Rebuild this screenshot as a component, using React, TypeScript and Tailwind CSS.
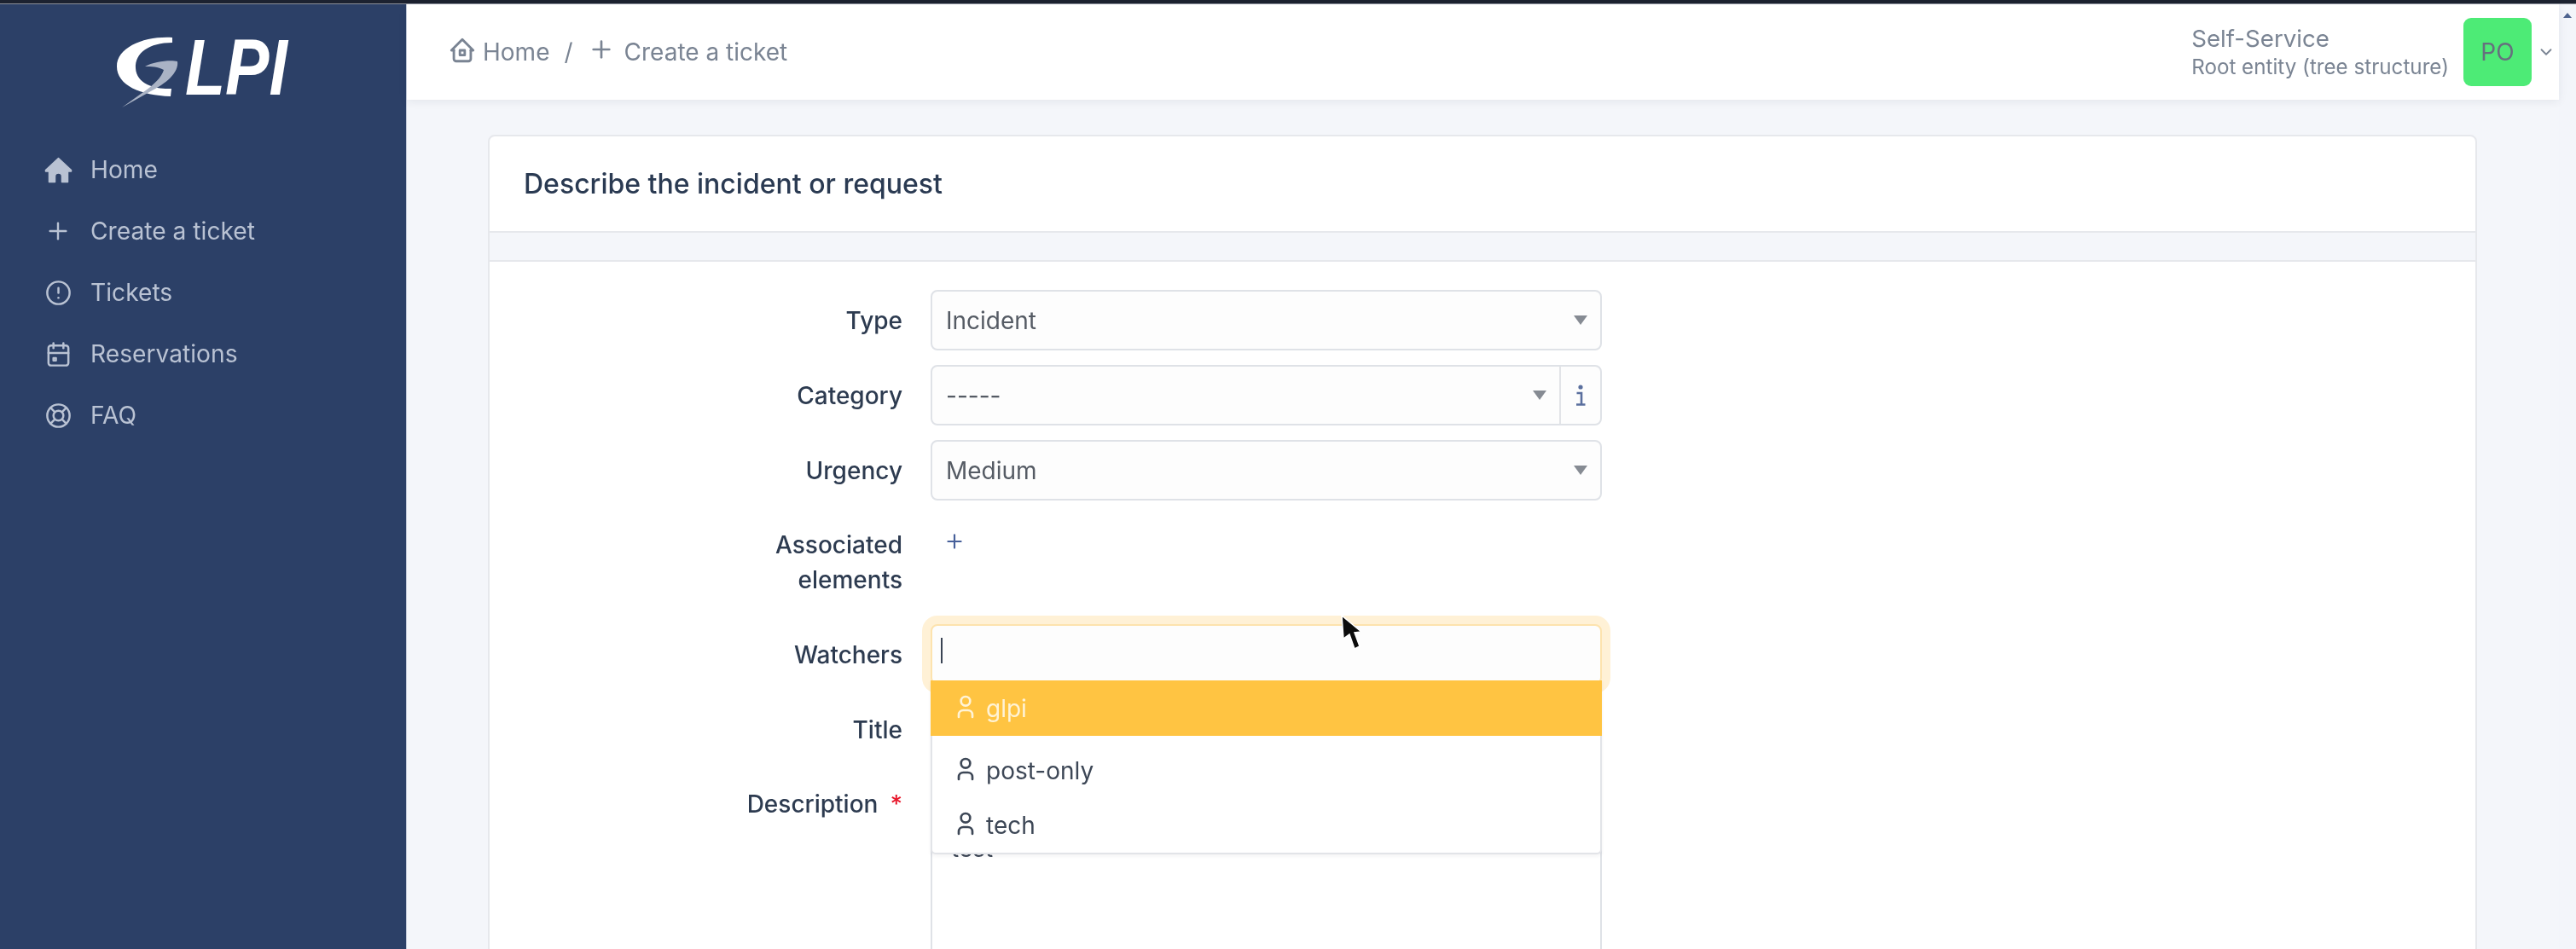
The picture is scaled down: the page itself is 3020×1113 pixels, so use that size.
import React from "react";
import {
  TbPlus,
  TbAlertCircle,
  TbCalendarEvent,
  TbLifebuoy,
  TbHome2,
  TbUser,
  TbChevronDown,
} from "react-icons/tb";

function Logo() {
  return (
    <svg width="260" height="120" viewBox="0 0 260 120" className="block">
      <path
        d="M102 24C70 22 37 35 37 58C37 80 65 92 100 93L101 84C85 85 60 80 59 60C58 42 75 30 102 30Z"
        fill="#ffffff"
      />
      <path
        d="M70 58C80 52 100 50 108 52C110 65 95 78 75 88L43 106L68 88C80 80 90 70 92 62C85 58 78 58 70 58Z"
        fill="#aab3c5"
      />
      <text
        x="117"
        y="91"
        fontFamily="'Liberation Sans', sans-serif"
        fontStyle="italic"
        fontWeight="700"
        fontSize="92"
        fill="#ffffff"
        textLength="120"
        lengthAdjust="spacingAndGlyphs"
      >
        LPI
      </text>
    </svg>
  );
}

function HomeSolid() {
  return (
    <svg width="33" height="31" viewBox="0 0 33 31">
      <path
        d="M16.5 1.5L31.5 15.5V17H27.5V29.5H20.5V23A4 4 0 0 0 12.5 23V29.5H5.5V17H1.5V15.5Z"
        fill="currentColor"
        stroke="currentColor"
        strokeWidth="1.5"
        strokeLinejoin="round"
      />
    </svg>
  );
}

const nav = [
  { label: "Home", icon: <HomeSolid /> },
  { label: "Create a ticket", icon: <TbPlus size={32} strokeWidth={1.8} /> },
  { label: "Tickets", icon: <TbAlertCircle size={35} strokeWidth={1.7} /> },
  { label: "Reservations", icon: <TbCalendarEvent size={35} strokeWidth={1.7} /> },
  { label: "FAQ", icon: <TbLifebuoy size={35} strokeWidth={1.7} /> },
];

function Sidebar() {
  return (
    <aside className="w-[477px] shrink-0 bg-[#2c4067] border-r border-[#c3cad9] text-[#b9c2d3]">
      <div className="h-[158px] pl-[100px] pt-[15px]">
        <Logo />
      </div>
      <nav>
        {nav.map((n) => (
          <div key={n.label} className="h-[72px] flex items-center pl-[50px] gap-[20px] text-[28.2px]">
            <span className="w-[36px] flex justify-center">{n.icon}</span>
            <span>{n.label}</span>
          </div>
        ))}
      </nav>
    </aside>
  );
}

function Caret() {
  return (
    <svg width="16" height="11" viewBox="0 0 16 11" className="block">
      <path d="M0 0H16L8 11Z" fill="#868b93" />
    </svg>
  );
}

function InfoGlyph() {
  return (
    <svg width="12" height="26" viewBox="0 0 12 26" className="block">
      <circle cx="6" cy="3" r="2.6" fill="#5a6f9e" />
      <path d="M1.5 10H7V23.5M1 23.5H11.5" fill="none" stroke="#5a6f9e" strokeWidth="2.6" />
    </svg>
  );
}

function Header() {
  return (
    <header className="relative z-10 h-[112px] shrink-0 bg-white shadow-[0_2px_10px_rgba(30,41,59,0.08)] flex items-center justify-between pl-[50px] pr-[4px] text-[#7a8493]">
      <div className="flex items-center text-[28px]">
        <TbHome2 size={34} strokeWidth={2} className="-ml-[2px] -mt-[4px]" />
        <span className="ml-[7px]">Home</span>
        <span className="ml-[17px]">/</span>
        <TbPlus size={32} strokeWidth={2} className="ml-[17px] -mt-[6px]" />
        <span className="ml-[11px]">Create a ticket</span>
      </div>
      <div className="flex items-center">
        <div className="flex flex-col">
          <span className="text-[27.7px] leading-[36px]">Self-Service</span>
          <span className="text-[24.2px] leading-[32px]">Root entity (tree structure)</span>
        </div>
        <div className="ml-[17px] w-[80px] h-[80px] rounded-[9px] bg-[#4deb76] flex items-center justify-center text-[28px] text-[#66707e]">
          PO
        </div>
        <TbChevronDown size={22} strokeWidth={2} className="ml-[6px]" />
      </div>
    </header>
  );
}

function Row({
  label,
  required,
  children,
  className,
}: {
  label: string;
  required?: boolean;
  children?: React.ReactNode;
  className?: string;
}) {
  return (
    <div className={"flex " + (className ?? "")}>
      <div className="w-[484px] shrink-0 h-[71px] flex items-center justify-end text-right text-[28px] font-medium text-[#2d3b50]">
        <span>{label}</span>
        {required && <span className="ml-[14px] text-[#e8172b]">*</span>}
      </div>
      <div className="ml-[33px] w-[787px]">{children}</div>
    </div>
  );
}

function Select({ value, addon }: { value: string; addon?: boolean }) {
  return (
    <div className="h-[71px] flex border-2 border-[#dfe2e7] rounded-[8px] bg-[#fdfdfd] text-[28px] text-[#555b64]">
      <div className="flex-1 flex items-center justify-between pl-[16px] pr-[15px]">
        <span>{value}</span>
        <Caret />
      </div>
      {addon && (
        <div className="w-[48px] border-l-2 border-[#e2e4e8] flex items-center justify-center">
          <InfoGlyph />
        </div>
      )}
    </div>
  );
}

function Options() {
  const items = [
    { t: "glpi", h: "h-[65px]", c: "bg-[#ffc442] text-[#fff3d6]" },
    { t: "post-only", h: "h-[82px]", c: "text-[#3d4756]" },
    { t: "tech", h: "h-[46px]", c: "text-[#3d4756]" },
  ];
  return (
    <div className="absolute left-0 right-0 top-[66px] z-20 bg-white border-x-2 border-b-2 border-[#e2e4e8] rounded-b-[6px] shadow-[0_2px_4px_rgba(30,41,59,0.06)] pb-[9px]">
      {items.map((i) => (
        <div key={i.t} className={"-mx-[2px] flex items-center pl-[25px] text-[28px] " + i.h + " " + i.c}>
          <TbUser size={32} strokeWidth={2} className="-mt-[4px]" />
          <span className="ml-[8px]">{i.t}</span>
        </div>
      ))}
    </div>
  );
}

function Cursor() {
  return (
    <svg
      width="30"
      height="46"
      viewBox="0 0 30 46"
      className="absolute left-[1571px] top-[719px] z-30"
    >
      <path
        d="M2 3L4 30L11 25L17 42L23 39L17 23L25 22Z"
        fill="#0c0c0c"
        stroke="#ffffff"
        strokeWidth="1.5"
      />
    </svg>
  );
}

export default function App() {
  return (
    <div className="relative w-[3020px] h-[1113px] overflow-hidden bg-[#f4f6fa] font-[Inter,sans-serif] flex flex-col blur-[0.7px]">
      <div className="h-[5px] shrink-0 bg-[#1c2230] border-b border-[#8a8f99]" />
      <div className="flex flex-1 min-h-0">
        <Sidebar />
        <div className="flex-1 min-w-0 flex flex-col">
          <Header />
          <main className="flex-1 min-h-0 overflow-hidden pt-[41px] pl-[95px] pr-[96px]">
            <section className="bg-white border-2 border-[#e6e8ec] rounded-[8px] h-[1000px]">
              <div className="h-[111px] flex items-center pl-[40px] text-[32px] font-medium text-[#2a3a52]">
                <span>Describe the incident or request</span>
              </div>
              <div className="h-[36px] bg-[#f4f6fa] border-y-2 border-[#e6e8ec]" />
              <div className="pt-[33px]">
                <Row label="Type">
                  <Select value="Incident" />
                </Row>
                <Row label="Category" className="mt-[17px]">
                  <Select value="-----" addon />
                </Row>
                <Row label="Urgency" className="mt-[17px]">
                  <Select value="Medium" />
                </Row>
                <div className="flex mt-[32px] h-[113px]">
                  <div className="w-[484px] shrink-0 text-right text-[28px] leading-[41px] font-medium text-[#2d3b50]">
                    Associated
                    <br />
                    elements
                  </div>
                  <div className="ml-[33px] pl-[15px] pt-[3px] text-[#47609a]">
                    <TbPlus size={26} strokeWidth={2} />
                  </div>
                </div>
                <Row label="Watchers">
                  <div className="relative">
                    <div className="h-[71px] border-2 border-[#fde3ae] rounded-[8px] bg-[#fdfdfd] shadow-[0_0_0_10px_#fff1d6] flex items-center pl-[10px]">
                      <div className="w-[2px] h-[30px] bg-[#3a4454] -mt-[10px]" />
                    </div>
                    <Options />
                  </div>
                </Row>
                <Row label="Title" className="mt-[17px]">
                  <div className="h-[71px] border-2 border-[#dfe2e7] rounded-[8px]" />
                </Row>
                <Row label="Description" required className="mt-[16px]">
                  <div className="h-[300px] border-2 border-[#dfe2e7] rounded-[8px] bg-white pt-[65px] pl-[22px] text-[28px] text-[#3d4756]">
                    test
                  </div>
                </Row>
              </div>
            </section>
          </main>
        </div>
        <div className="w-[20px] shrink-0 bg-[#f3f5fa] flex justify-center pt-[10px]">
          <svg width="10" height="6" viewBox="0 0 10 6">
            <path d="M5 0L10 6H0Z" fill="#4f648f" />
          </svg>
        </div>
      </div>
      <Cursor />
    </div>
  );
}
